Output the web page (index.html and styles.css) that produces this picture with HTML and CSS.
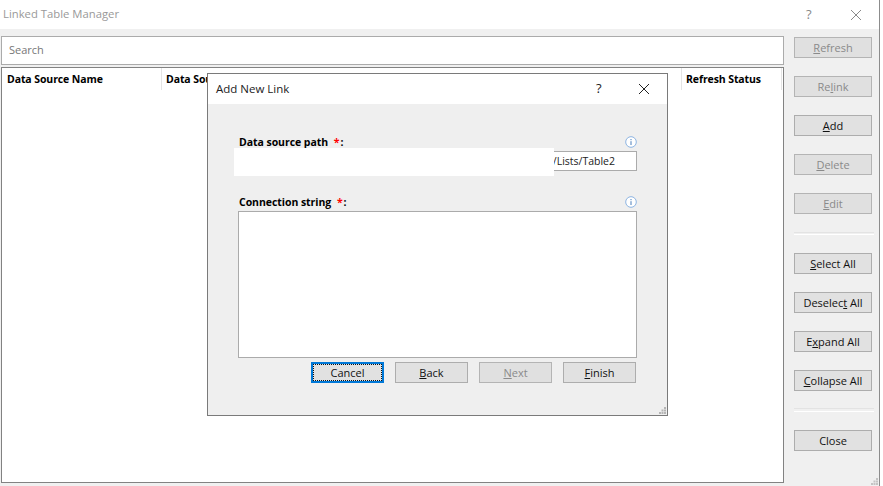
FILE: index.html
```html
<!DOCTYPE html>
<html lang="en">
<head>
<meta charset="utf-8">
<title>Linked Table Manager</title>
<link rel="stylesheet" href="styles.css">
</head>
<body>
<div class="window">
  <header class="titlebar">
    <span class="title">Linked Table Manager</span>
    <span class="help">?</span>
    <svg class="close-x" width="12" height="12" viewBox="0 0 12 12"><path d="M1 1L11 11M11 1L1 11" stroke="#8a8a8a" fill="none"/></svg>
  </header>
  <div class="content">
    <main class="left">
      <div class="search">Search</div>
      <div class="table">
        <div class="thead">
          <div class="th">Data Source Name</div>
          <div class="th">Data Sou</div>
          <div class="th">Refresh Status</div>
        </div>
      </div>
    </main>
    <aside class="side">
      <button class="btn off"><u>R</u>efresh</button>
      <button class="btn off">Re<u>l</u>ink</button>
      <button class="btn"><u>A</u>dd</button>
      <button class="btn off"><u>D</u>elete</button>
      <button class="btn off"><u>E</u>dit</button>
      <div class="sep"></div>
      <button class="btn"><u>S</u>elect All</button>
      <button class="btn">Deselec<u>t</u> All</button>
      <button class="btn">E<u>x</u>pand All</button>
      <button class="btn"><u>C</u>ollapse All</button>
      <div class="sep sep2"></div>
      <button class="btn">Close</button>
    </aside>
  </div>
  <svg class="grip grip-main" width="7" height="7" viewBox="0 0 7 7"><path d="M5 0h2v2H5zM2.500 2.500h2v2h-2zM5 2.500h2v2H5zM0 5h2v2H0zM2.500 5h2v2h-2zM5 5h2v2H5z" fill="#c4c4c4"/></svg>

  <section class="dialog">
    <header class="dlg-title">
      <span class="dlg-name">Add New Link</span>
      <span class="dlg-help">?</span>
      <svg class="dlg-x" width="12" height="12" viewBox="0 0 12 12"><path d="M1 1L11 11M11 1L1 11" stroke="#222" fill="none"/></svg>
    </header>
    <div class="dlg-body">
      <div class="label-row lr1">
        <label class="lbl">Data source path <span class="req">*</span>:</label>
        <svg class="info" width="12" height="12" viewBox="0 0 12 12"><circle cx="6" cy="6" r="5.300" fill="#fff" stroke="#8db4e2"/><path d="M6 5.200V9M6 3V4.200" stroke="#4a7ebb" fill="none"/></svg>
      </div>
      <div class="path-wrap">
        <div class="path-input">/Lists/Table2</div>
        <div class="redact"></div>
      </div>
      <div class="label-row lr2">
        <label class="lbl">Connection string <span class="req">*</span>:</label>
        <svg class="info" width="12" height="12" viewBox="0 0 12 12"><circle cx="6" cy="6" r="5.300" fill="#fff" stroke="#8db4e2"/><path d="M6 5.200V9M6 3V4.200" stroke="#4a7ebb" fill="none"/></svg>
      </div>
      <div class="conn"></div>
      <div class="dlg-actions">
        <button class="btn dbtn focus"><span class="dots">Cancel</span></button>
        <button class="btn dbtn"><u>B</u>ack</button>
        <button class="btn dbtn off"><u>N</u>ext</button>
        <button class="btn dbtn"><u>F</u>inish</button>
      </div>
    </div>
    <svg class="grip grip-dlg" width="7" height="7" viewBox="0 0 7 7"><path d="M5 0h2v2H5zM2.500 2.500h2v2h-2zM5 2.500h2v2H5zM0 5h2v2H0zM2.500 5h2v2h-2zM5 5h2v2H5z" fill="#b5b5b5"/></svg>
  </section>
</div>
</body>
</html>
```
FILE: styles.css
```css
* { box-sizing: border-box; }
html, body { margin: 0; padding: 0; background: #fff; }
body {
  width: 883px;
  height: 486px;
  overflow: hidden;
  font-family: "Open Sans", "Noto Sans", sans-serif;
  font-size: 11px;
  color: #111;
}
.window {
  position: relative;
  width: 880px;
  height: 486px;
  background: #f0f0f0;
  border-right: 1px solid #8c8c8c;
  display: flex;
  flex-direction: column;
}
.titlebar {
  height: 29px;
  flex: none;
  background: #fff;
  display: flex;
  align-items: center;
  padding: 0 0 2px 3px;
}
.title { font-size: 11.300px; color: #999; flex: 1; }
.help { color: #888; font-size: 13px; width: 8px; margin-right: 36px; margin-left: -1px; }
.close-x { margin: 2px 17px 0 0; }
.content { flex: 1; display: flex; min-height: 0; }
.left {
  width: 784px;
  flex: none;
  padding: 7px 0 3px 1px;
  display: flex;
  flex-direction: column;
  gap: 2px;
}
.search {
  height: 29px;
  flex: none;
  background: #fff;
  border: 1px solid #ababab;
  padding-left: 7px;
  line-height: 26px;
  font-size: 11px;
  color: #777;
}
.table {
  flex: 1;
  background: #fff;
  border: 1px solid #828282;
}
.thead {
  display: grid;
  grid-template-columns: 160px 520px 100px;
  height: 22px;
}
.th {
  font-weight: 700;
  font-size: 10.500px;
  letter-spacing: -0.1px;
  line-height: 23px;
  padding-left: 4px;
  border-right: 1px solid #e4e4e4;
  color: #000;
  white-space: nowrap;
  overflow: hidden;
}
.th:first-child { padding-left: 5px; }
.side {
  flex: 1;
  padding: 8px 0 0 10px;
  display: flex;
  flex-direction: column;
  align-items: flex-start;
  gap: 18px;
}
.btn {
  width: 78px;
  height: 21px;
  flex: none;
  padding: 0;
  background: #e1e1e1;
  border: 1px solid #adadad;
  font-family: inherit;
  font-size: 11px;
  line-height: 18px;
  color: #111;
  text-align: center;
  white-space: nowrap;
}
.off { color: #8a8a8a; background: #e0e0e0; border-color: #b4b4b4; }
.sep {
  width: 80px;
  height: 3px;
  border-top: 1px solid #e3e3e3;
  border-bottom: 1px solid #fff;
}
.sep2 { height: 4px; margin-top: -1px; }
.grip { position: absolute; }
.grip-main { right: 1px; bottom: 1px; }
.dialog {
  position: absolute;
  left: 207px;
  top: 73px;
  width: 461px;
  height: 343px;
  background: #efefef;
  border: 1px solid #7a7a7a;
  display: flex;
  flex-direction: column;
}
.dlg-title {
  height: 30px;
  flex: none;
  background: #fff;
  display: flex;
  align-items: center;
  padding: 0 0 2px 8px;
}
.dlg-name { flex: 1; font-size: 11.500px; color: #222; }
.dlg-help { font-size: 13px; color: #222; width: 8px; margin-right: 34px; }
.dlg-x { margin: 1px 17px 0 0; }
.dlg-body { flex: 1; padding: 0 30px 0 30px; display: flex; flex-direction: column; }
.label-row {
  display: flex;
  justify-content: space-between;
  align-items: flex-end;
  height: 16px;
}
.lr1 { margin-top: 30px; }
.lr2 { margin-top: 23px; }
.lbl { font-weight: 700; font-size: 10.500px; letter-spacing: -0.05px; color: #000; line-height: 16px; margin-left: 1px; }
.req { color: #f00; margin: 0 1px 0 3px; }
.info { margin-bottom: 2px; }
.path-wrap { position: relative; margin-top: 1px; }
.path-input {
  height: 20px;
  background: #fff;
  border: 1px solid #ababab;
  font-size: 10.500px;
  line-height: 18px;
  text-align: right;
  padding-right: 21px;
  color: #222;
}
.redact {
  position: absolute;
  left: -4px;
  top: -3px;
  width: 320px;
  height: 28px;
  background: #fff;
}
.conn {
  height: 147px;
  background: #fff;
  border: 1px solid #ababab;
  margin-top: 1px;
}
.dlg-actions {
  display: flex;
  gap: 11px;
  margin-top: 4px;
  padding-left: 73px;
}
.dbtn { width: 73px; height: 21px; }
.focus { border: 2px solid #0078d7; padding: 0; line-height: 15px; }
.dots {
  display: block;
  height: 17px;
  border: 1px dotted #111;
  line-height: 15px;
}
.grip-dlg { right: 1px; bottom: 1px; }
```
